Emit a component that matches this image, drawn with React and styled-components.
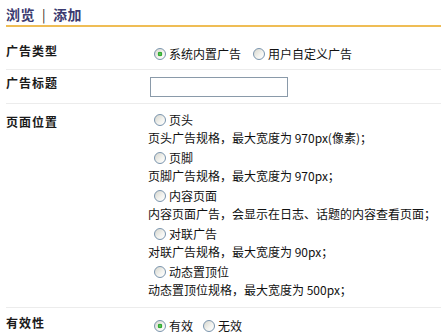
import React from "react";
import styled, { createGlobalStyle } from "styled-components";

const Global = createGlobalStyle`
	body {
		margin: 0;
		background: #fff;
		font-family: "Noto Sans CJK SC", "Liberation Sans", sans-serif;
		font-size: 12px;
		color: #111;
	}
`;

const Page = styled.div`
	margin-left: 6px;
	width: 435px;
`;

const Header = styled.div`
	display: flex;
	align-items: center;
	gap: 7px;
	height: 22px;
	padding-top: 3px;
	border-bottom: 2px solid #efbd55;
	font-size: 14px;
	font-weight: bold;
	letter-spacing: 0.5px;
	color: #3b3a70;
`;

const Bar = styled.span`
	font-weight: normal;
	font-size: 13px;
	color: #222;
`;

const Row = styled.div`
	display: grid;
	grid-template-columns: 142px 1fr;
	height: ${({ h }) => h}px;
	border-bottom: ${({ last }) => (last ? "none" : "1px solid #ececec")};
`;

const Label = styled.div`
	padding-top: ${({ top }) => top}px;
	line-height: 16px;
	font-weight: bold;
	letter-spacing: 1px;
	color: #1a1a1a;
`;

const Value = styled.div`
	padding-top: ${({ top }) => top}px;
	line-height: 16px;
`;

const Options = styled.div`
	display: flex;
	gap: ${({ gap }) => gap}px;
`;

const Option = styled.label`
	display: inline-flex;
	align-items: center;
	line-height: 16px;
`;

const Radio = styled.input.attrs({ type: "radio" })`
	appearance: none;
	width: 12px;
	height: 12px;
	margin: 0 3px 0 6px;
	border-radius: 50%;
	border: 1px solid #7a94ad;
	box-sizing: border-box;
	background: linear-gradient(135deg, #d6d6ce 0%, #f4f4f0 60%, #fff 100%);

	&:checked {
		background: radial-gradient(circle, #6fd36f 0, #21a121 2px, transparent 2.6px),
			linear-gradient(135deg, #d6d6ce 0%, #f4f4f0 60%, #fff 100%);
	}
`;

const TextInput = styled.input`
	width: 138px;
	height: 20px;
	margin: 0 0 0 2px;
	box-sizing: border-box;
	border: 1px solid #8a9aa9;
	padding: 0 3px;
	display: block;
`;

const Block = styled.div`
	display: flex;
	flex-direction: column;
`;

const RadioLine = styled.div`
	display: flex;
	align-items: center;
	padding-top: 3px;
	height: 18px;
`;

const Desc = styled.div`
	line-height: 17px;
	white-space: nowrap;
`;

const positions = [
	["页头", "页头广告规格，最大宽度为 970px(像素)；"],
	["页脚", "页脚广告规格，最大宽度为 970px；"],
	["内容页面", "内容页面广告，会显示在日志、话题的内容查看页面；"],
	["对联广告", "对联广告规格，最大宽度为 90px；"],
	["动态置顶位", "动态置顶位规格，最大宽度为 500px；"],
];

export default function App() {
	return (
		<>
			<Global />
			<Page>
				<Header>
					<span>浏览</span>
					<Bar>|</Bar>
					<span>添加</span>
				</Header>

				<Row h={42}>
					<Label top={16}>广告类型</Label>
					<Value top={19}>
						<Options gap={6}>
							<Option>
								<Radio name="type" defaultChecked />
								系统内置广告
							</Option>
							<Option>
								<Radio name="type" />
								用户自定义广告
							</Option>
						</Options>
					</Value>
				</Row>

				<Row h={33}>
					<Label top={5}>广告标题</Label>
					<Value top={7}>
						<TextInput />
					</Value>
				</Row>

				<Row h={203}>
					<Label top={10}>页面位置</Label>
					<Value top={4}>
						{positions.map(([name, desc]) => (
							<Block key={name}>
								<RadioLine>
									<Option>
										<Radio name="pos" />
										{name}
									</Option>
								</RadioLine>
								<Desc>{desc}</Desc>
							</Block>
						))}
					</Value>
				</Row>

				<Row h={26} last>
					<Label top={7}>有效性</Label>
					<Value top={10}>
						<Options gap={4}>
							<Option>
								<Radio name="valid" defaultChecked />
								有效
							</Option>
							<Option>
								<Radio name="valid" />
								无效
							</Option>
						</Options>
					</Value>
				</Row>
			</Page>
		</>
	);
}
